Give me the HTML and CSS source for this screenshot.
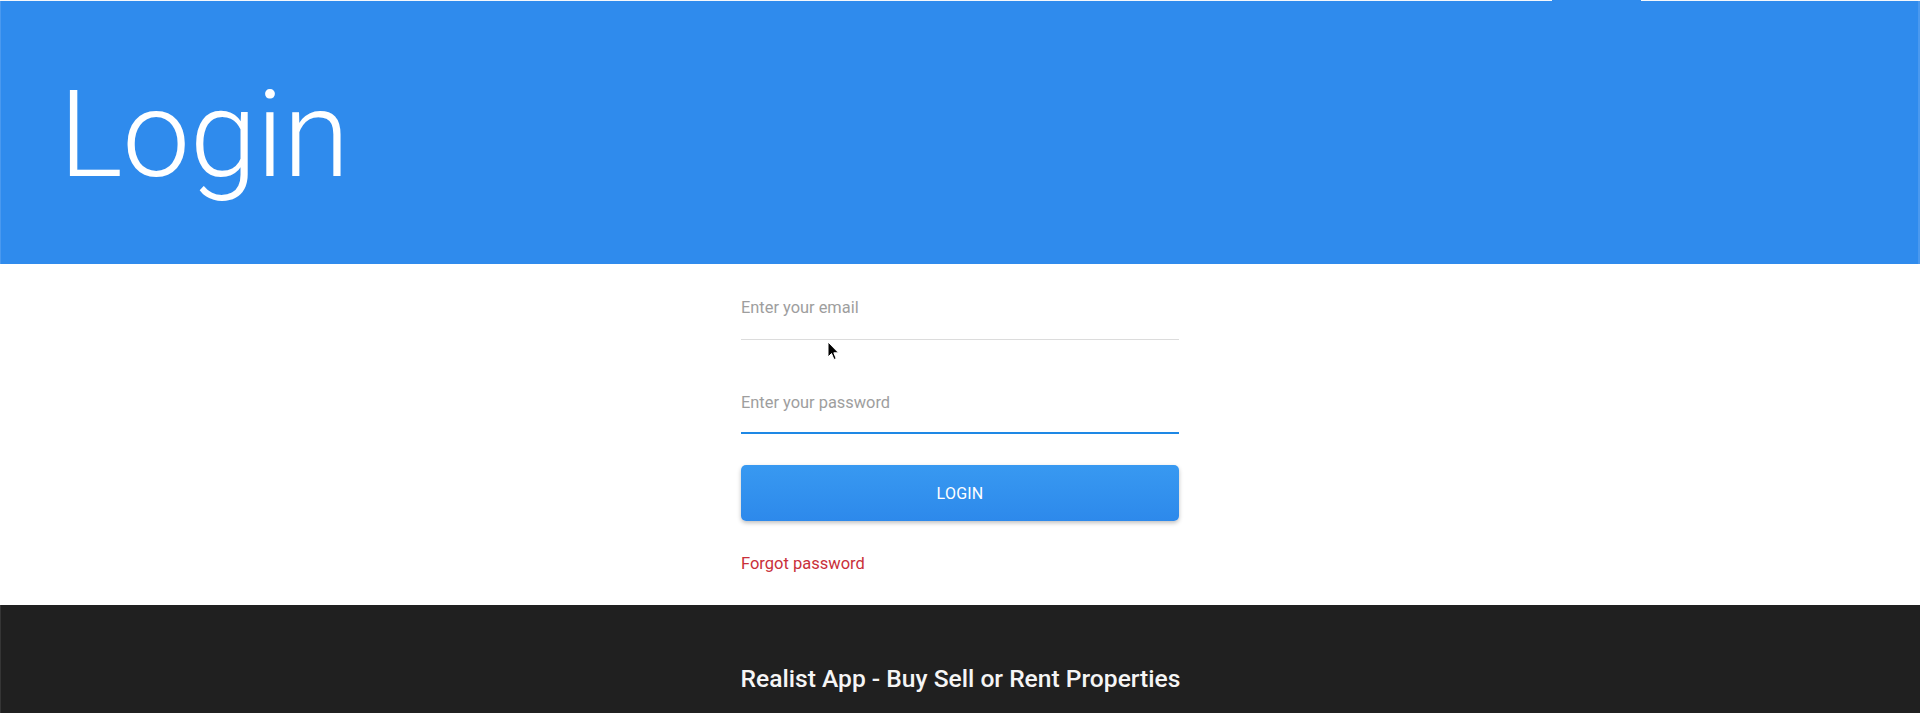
FILE: index.html
```html
<!DOCTYPE html>
<html lang="en">
<head>
<meta charset="utf-8">
<title>Login - Realist App</title>
<link rel="stylesheet" href="styles.css">
</head>
<body>
<div class="topline"><span class="tab"></span></div>
<header class="hero">
  <h1 class="hero-title">Login</h1>
</header>
<main class="content">
  <form class="login-form">
    <label class="field field-email">
      <input type="email" placeholder="Enter your email">
    </label>
    <label class="field field-password is-focused">
      <input type="password" placeholder="Enter your password">
    </label>
    <button type="button" class="btn-login">LOGIN</button>
    <a class="forgot" href="#">Forgot password</a>
  </form>
</main>
<footer class="footer">
  <p class="footer-title">Realist App - Buy Sell or Rent Properties</p>
</footer>
<svg class="cursor" width="13" height="20" viewBox="0 0 13 20" aria-hidden="true">
  <path d="M1 1 L1 16 L4.5 12.5 L7 18.5 L9.2 17.6 L6.8 11.8 L11.5 11.8 Z" fill="#000" stroke="#fff" stroke-width="1" stroke-linejoin="round"/>
</svg>
</body>
</html>
```

FILE: styles.css
```css
* { box-sizing: border-box; }
html, body {
  margin: 0;
  padding: 0;
  background: #ffffff;
  font-family: Roboto, "Liberation Sans", Arial, sans-serif;
}
body { height: 713px; overflow: hidden; position: relative; }

.topline {
  height: 1px;
  background: #f4f7fb;
  display: flex;
  padding-left: 1552px;
}
.topline .tab {
  width: 89px;
  height: 1px;
  background: #2f8bed;
}

.hero {
  height: 263px;
  background: #2f8bed;
  border-left: 1px solid #4a99ef;
  border-right: 2px solid #4a99ef;
  display: flex;
  align-items: flex-start;
  padding-left: 58px;
}
.hero-title {
  margin: 0;
  padding-top: 62px;
  font-size: 121px;
  font-weight: 300;
  color: #ffffff;
  line-height: 1.2;
  letter-spacing: -0.5px;
}

.content {
  height: 341px;
  display: flex;
  justify-content: center;
}
.login-form {
  width: 438px;
  display: flex;
  flex-direction: column;
  padding-top: 33px;
}
.field {
  display: block;
  border-bottom: 1px solid #dcdcdc;
  height: 43px;
}
.field input {
  display: block;
  width: 100%;
  border: 0;
  outline: 0;
  background: transparent;
  font-family: inherit;
  font-size: 16.4px;
  color: #333;
  padding: 0;
  height: 22px;
  line-height: 22px;
}
.field input::placeholder { color: #9e9e9e; }
.field-password {
  margin-top: 52px;
  height: 42px;
  border-bottom: 2px solid #1e88e5;
}
.btn-login {
  margin-top: 31px;
  height: 56px;
  border: 0;
  border-radius: 5px;
  background: linear-gradient(#3899f1, #2d89eb);
  color: #ffffff;
  font-family: inherit;
  font-size: 16px;
  letter-spacing: 0.2px;
  box-shadow: 0 2px 4px rgba(0,0,0,0.25);
  cursor: pointer;
}
.forgot {
  margin-top: 33px;
  color: #c9303a;
  font-size: 16.5px;
  text-decoration: none;
  line-height: 20px;
}

.footer {
  height: 109px;
  background: #202020;
  border-left: 1px solid #353535;
  display: flex;
  justify-content: center;
}
.footer-title {
  margin: 0;
  padding-top: 60px;
  font-size: 24.6px;
  font-weight: 500;
  color: #f5f5f5;
  line-height: 28px;
}

.cursor {
  position: absolute;
  left: 827px;
  top: 341px;
  pointer-events: none;
}
```
